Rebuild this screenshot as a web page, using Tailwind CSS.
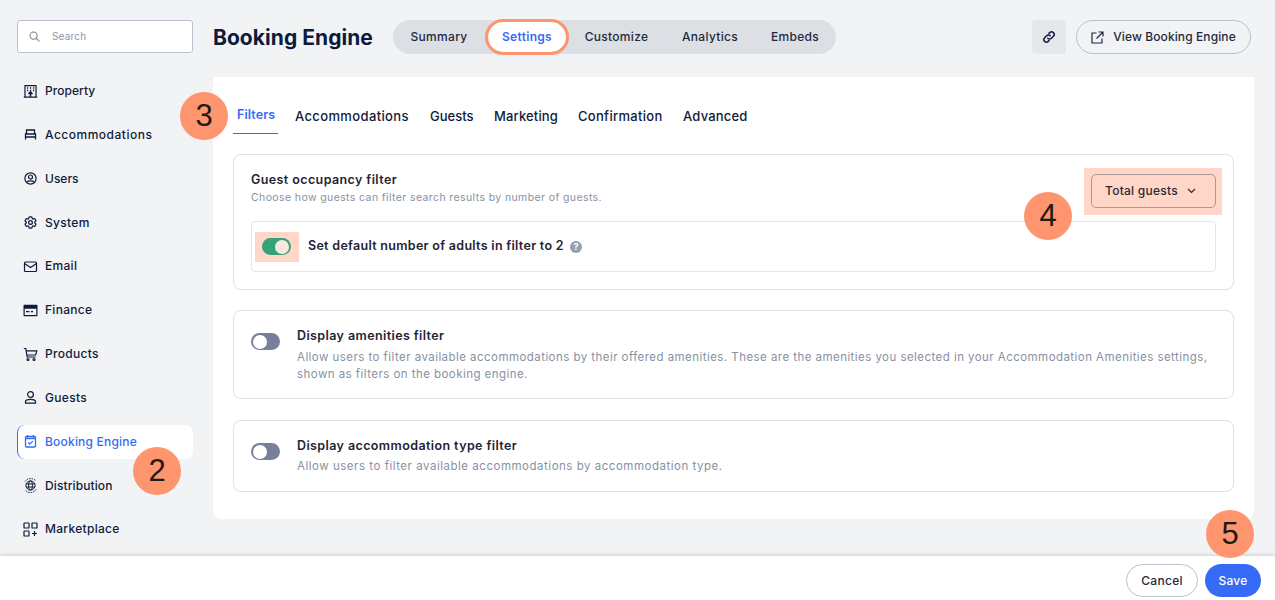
<!DOCTYPE html>
<html lang="en">
<head>
<meta charset="utf-8">
<script src="https://cdn.jsdelivr.net/npm/@tailwindcss/browser@4"></script>
<title>Booking Engine</title>
</head>
<body class="m-0">
<div class="relative w-[1275px] h-[600px] overflow-hidden bg-[#F1F3F5] font-['Inter','Liberation_Sans',sans-serif] text-[#101B3B]">
  <div class="flex h-[556px]">
    <!-- Sidebar -->
    <aside class="w-[213px] shrink-0 pl-[17px] pt-[20px]">
      <div class="flex items-center w-[176px] h-[33px] bg-white border border-[#B9C1CF] rounded-[3px] pl-[11px] gap-[12px]">
        <svg class="w-[11px] h-[11px]" viewBox="0 0 12 12" fill="none" stroke="#6F7A8E" stroke-width="1.1"><circle cx="5" cy="5" r="3.9"/><path d="M8 8l3.2 3.2" stroke-linecap="round"/></svg>
        <span class="text-[10px] tracking-[0.2px] text-[#8C96A8]">Search</span>
      </div>
      <nav class="mt-[21px] flex flex-col gap-[9.85px] text-[12px] font-medium tracking-[0.3px]">
        <a class="flex items-center h-[34px] w-[176px] pl-[6px] gap-[7px]">
          <svg class="w-[15px] h-[15px]" viewBox="0 0 15 15" fill="none" stroke="#101B3B" stroke-width="1.2"><path d="M2 13V1.6h11V13M.8 13.2h13.4"/><path d="M4 4h1.2M7 4h1.2M10 4h1.2M4 6.5h1.2M7 6.5h1.2M10 6.5h1.2" stroke-width="1.5"/><path d="M7.5 8v5M5.5 10l2-2 2 2" stroke-width="1.6"/></svg>
          <span class="tracking-[0.05px]">Property</span>
        </a>
        <a class="flex items-center h-[34px] w-[176px] pl-[6px] gap-[7px]">
          <svg class="w-[15px] h-[15px]" viewBox="0 0 15 15" fill="none" stroke="#101B3B" stroke-width="1.3"><path d="M3.500 6.500V3h8v3.500M2.500 12.500V7h10v5.500M2.500 10h10"/></svg>
          <span class="tracking-[0.5px]">Accommodations</span>
        </a>
        <a class="flex items-center h-[34px] w-[176px] pl-[6px] gap-[7px]">
          <svg class="w-[15px] h-[15px]" viewBox="0 0 15 15" fill="none" stroke="#101B3B" stroke-width="1.2"><circle cx="7.5" cy="7.5" r="5.6"/><circle cx="7.5" cy="6" r="2"/><path d="M4 11c1-1.6 6-1.6 7 0"/></svg>
          <span class="tracking-[0px]">Users</span>
        </a>
        <a class="flex items-center h-[34px] w-[176px] pl-[6px] gap-[7px]">
          <svg class="w-[15px] h-[15px]" viewBox="0 0 24 24" fill="none" stroke="#101B3B" stroke-width="2"><path d="M9.594 3.94c.09-.542.56-.94 1.11-.94h2.593c.55 0 1.02.398 1.11.94l.213 1.281c.063.374.313.686.645.87.074.04.147.083.22.127.325.196.72.257 1.075.124l1.217-.456a1.125 1.125 0 0 1 1.37.49l1.296 2.247a1.125 1.125 0 0 1-.26 1.431l-1.003.827c-.293.241-.438.613-.43.992a7.723 7.723 0 0 1 0 .255c-.008.378.137.75.43.991l1.004.827c.424.35.534.955.26 1.43l-1.298 2.247a1.125 1.125 0 0 1-1.369.491l-1.217-.456c-.355-.133-.75-.072-1.076.124a6.47 6.47 0 0 1-.22.128c-.331.183-.581.495-.644.869l-.213 1.281c-.09.543-.56.94-1.11.94h-2.594c-.55 0-1.019-.398-1.11-.94l-.213-1.281c-.062-.374-.312-.686-.644-.87a6.52 6.52 0 0 1-.22-.127c-.325-.196-.72-.257-1.076-.124l-1.217.456a1.125 1.125 0 0 1-1.369-.49l-1.297-2.247a1.125 1.125 0 0 1 .26-1.431l1.004-.827c.292-.24.437-.613.43-.991a6.932 6.932 0 0 1 0-.255c.007-.38-.138-.751-.43-.992l-1.004-.827a1.125 1.125 0 0 1-.26-1.43l1.297-2.247a1.125 1.125 0 0 1 1.37-.491l1.216.456c.356.133.751.072 1.076-.124.072-.044.146-.086.22-.128.332-.183.582-.495.644-.869l.214-1.28Z"/><circle cx="12" cy="12" r="3"/></svg>
          <span>System</span>
        </a>
        <a class="flex items-center h-[34px] w-[176px] pl-[6px] gap-[7px]">
          <svg class="w-[15px] h-[15px]" viewBox="0 0 15 15" fill="none" stroke="#101B3B" stroke-width="1.2"><rect x="1.500" y="3" width="12" height="9.500" rx="1"/><path d="M1.500 4.500l6 4 6-4"/></svg>
          <span>Email</span>
        </a>
        <a class="flex items-center h-[34px] w-[176px] pl-[6px] gap-[7px]">
          <svg class="w-[15px] h-[15px]" viewBox="0 0 15 15"><path fill-rule="evenodd" fill="#101B3B" d="M1.500 1.800h12c.6 0 1 .4 1 1v9.400c0 .6-.4 1-1 1h-12c-.6 0-1-.4-1-1V2.800c0-.6.4-1 1-1zM1.700 5.800v6.200h11.600V5.800zM3 8h3.500v1.200H3zM8 8h2v1.200H8z"/></svg>
          <span>Finance</span>
        </a>
        <a class="flex items-center h-[34px] w-[176px] pl-[6px] gap-[7px]">
          <svg class="w-[15px] h-[15px]" viewBox="0 0 15 15" fill="none" stroke="#101B3B" stroke-width="1.2"><path d="M.8 1.500h2l1.300 8.500h8.600M3.200 3.800h10.600L12.600 8H3.800"/><circle cx="5" cy="12.500" r="1"/><circle cx="11" cy="12.500" r="1"/></svg>
          <span>Products</span>
        </a>
        <a class="flex items-center h-[34px] w-[176px] pl-[6px] gap-[7px]">
          <svg class="w-[15px] h-[15px]" viewBox="0 0 15 15" fill="none" stroke="#101B3B" stroke-width="1.2"><circle cx="7.500" cy="4.500" r="2.900"/><path d="M2.500 13.200v-1.600c0-3 10-3 10 0v1.600z"/></svg>
          <span>Guests</span>
        </a>
        <a class="flex items-center h-[34px] w-[176px] pl-[5px] gap-[7px] bg-white rounded-lg border-l border-[#356BF6] text-[#356BF6]">
          <svg class="w-[15px] h-[15px]" viewBox="0 0 15 15" fill="none" stroke="#356BF6" stroke-width="1.300"><rect x="2.500" y="2.500" width="10" height="10.500" rx="1"/><path d="M4.500 1v2.500M10.500 1v2.500M2.500 4.500h10" /><path d="M5.200 8.500l1.600 1.600 3-3"/></svg>
          <span class="tracking-[0.2px]">Booking Engine</span>
        </a>
        <a class="flex items-center h-[34px] w-[176px] pl-[6px] gap-[7px]">
          <svg class="w-[15px] h-[15px]" viewBox="0 0 15 15" fill="none" stroke="#101B3B" stroke-width="1"><circle cx="7.500" cy="7.500" r="4.600"/><ellipse cx="7.500" cy="7.500" rx="2" ry="4.600"/><path d="M3 6h9M3 9h9"/><path d="M2 3.500A7 7 0 0 1 13 3M13.200 11.500A7 7 0 0 1 2 12" stroke-dasharray="1.500 1"/></svg>
          <span class="tracking-[0.1px]">Distribution</span>
        </a>
        <a class="flex items-center h-[34px] w-[176px] pl-[6px] gap-[7px]">
          <svg class="w-[15px] h-[15px]" viewBox="0 0 15 15" fill="none" stroke="#101B3B" stroke-width="1.200"><rect x="1" y="1" width="5" height="5" rx=".6"/><rect x="9" y="1" width="5" height="5" rx=".6"/><rect x="1" y="9" width="5" height="5" rx=".6"/><path d="M11.500 9v5M9 11.500h5"/></svg>
          <span>Marketplace</span>
        </a>
      </nav>
    </aside>

    <!-- Main -->
    <main class="w-[1041px] shrink-0 pt-[20px]">
      <header class="flex items-center h-[34px]">
        <h1 class="m-0 text-[21px] font-bold leading-none tracking-[0.05px] text-[#0D1A3C] w-[180px]">Booking Engine</h1>
        <div class="flex items-center w-[443px] h-[34px] rounded-full bg-[#DCDFE4] text-[12px] font-medium tracking-[0.3px] text-[#1F2A40] text-center">
          <span class="w-[92px]">Summary</span>
          <span class="w-[78px] h-[30px] flex items-center justify-center bg-white rounded-full text-[#356BF6] font-semibold outline-3 outline-[#FF956E] mx-[3px]">Settings</span>
          <span class="w-[95px]">Customize</span>
          <span class="w-[92px]">Analytics</span>
          <span class="w-[78px]">Embeds</span>
        </div>
        <div class="ml-auto flex items-center gap-[10px] mr-[3px]">
          <button class="flex items-center justify-center w-[34px] h-[34px] rounded-[4px] bg-[#E5E7EB]">
            <svg class="w-[14px] h-[14px]" viewBox="0 0 14 14" fill="none" stroke="#101B3B" stroke-width="1.500" stroke-linecap="round"><path d="M5.800 8.200a2.500 2.500 0 0 0 3.600 0l2-2a2.500 2.500 0 0 0-3.600-3.600l-.8.8"/><path d="M8.200 5.800a2.500 2.500 0 0 0-3.600 0l-2 2a2.500 2.500 0 0 0 3.600 3.600l.8-.8"/></svg>
          </button>
          <button class="flex items-center justify-center w-[175px] h-[34px] rounded-full border border-[#B9C1CF] gap-[9px] text-[12px] font-medium tracking-[0.1px] text-[#1F2A40]">
            <svg class="w-[13px] h-[13px]" viewBox="0 0 13 13" fill="none" stroke="#1F2A40" stroke-width="1.200"><path d="M5.500 2H1v10h10V7.500M7.500 1H12v4.500M12 1L5.500 7.500"/></svg>
            <span>View Booking Engine</span>
          </button>
        </div>
      </header>

      <section class="mt-[23px] h-[442px] w-[1041px] bg-white rounded-b-lg px-[20px]">
        <div class="flex items-start pt-[30px] h-[77px] text-[13px] font-medium tracking-[0.3px]">
          <div class="w-[45px] h-[27px] border-b border-[#356BF6] pl-[4px] text-[12.5px] tracking-[0.1px] text-[#356BF6] font-semibold leading-[16px]">Filters</div>
          <div class="flex gap-[21px] ml-[17px] leading-[18px] whitespace-nowrap">
            <span class="w-[114px] tracking-[0.37px]">Accommodations</span><span class="w-[43px] tracking-[0px]">Guests</span><span class="w-[63px] tracking-[0.15px]">Marketing</span><span class="w-[84px]">Confirmation</span><span class="w-[64px] tracking-[0.2px]">Advanced</span>
          </div>
        </div>

        <div class="h-[136px] border border-[#DEE1E6] rounded-lg pl-[17px] pr-[17px] pt-[19px]">
          <div class="flex justify-between items-start">
            <div>
              <div class="text-[12.5px] font-semibold leading-[16px] text-[#1F2435] tracking-[0.4px] -mt-[2px]">Guest occupancy filter</div>
              <div class="mt-[2px] text-[10.5px] leading-[16px] text-[#8791A3] tracking-[0.39px]">Choose how guests can filter search results by number of guests.</div>
            </div>
            <div class="-mt-[6px] -mr-[6px] bg-[#FFD6C8] pl-[7px] pr-[6px] pt-[6px] pb-[7px]">
              <button class="flex items-center w-[125px] h-[34px] rounded-[5px] border border-[#A89A97] pl-[13px] gap-[9px] text-[12px] font-medium tracking-[0.25px] text-[#2B2A33]">
                <span>Total guests</span>
                <svg class="w-[9px] h-[6px]" viewBox="0 0 9 6" fill="none" stroke="#2B2A33" stroke-width="1.200"><path d="M1 1l3.500 3.500L8 1"/></svg>
              </button>
            </div>
          </div>
          <div class="mt-[6px] h-[51px] border border-[#E3E6EA] rounded-[4px] flex items-center pl-[3px]">
            <div class="w-[44px] h-[30px] bg-[#FFD6C8] flex items-center pl-[7px]">
              <span class="w-[29px] h-[17px] rounded-full bg-[#34A37A] flex items-center justify-end pr-[2px]"><span class="w-[14px] h-[14px] rounded-full bg-[#FBE9DF]"></span></span>
            </div>
            <span class="ml-[9px] text-[12.5px] font-semibold tracking-[0.3px] text-[#1F2435]">Set default number of adults in filter to 2</span>
            <span class="ml-[6px] w-[12px] h-[12px] rounded-full bg-[#969FAF] text-white text-[9px] font-bold flex items-center justify-center leading-none">?</span>
          </div>
        </div>

        <div class="mt-[20px] h-[89px] border border-[#DEE1E6] rounded-lg pl-[17px] pr-[17px] pt-[22px] flex items-start gap-[17px]">
          <span class="w-[29px] h-[17px] shrink-0 rounded-full bg-[#76809A] flex items-center pl-[2px]"><span class="w-[14px] h-[14px] rounded-full bg-white"></span></span>
          <div class="-mt-[6px]">
            <div class="text-[12.5px] font-semibold leading-[17px] text-[#1F2435] tracking-[0.4px]">Display amenities filter</div>
            <div class="mt-[5px] text-[11.5px] leading-[17px] text-[#8791A3] tracking-[0.45px] whitespace-nowrap">Allow users to filter available accommodations by their offered amenities. These are the amenities you selected in your Accommodation Amenities settings,<br>shown as filters on the booking engine.</div>
          </div>
        </div>

        <div class="mt-[21px] h-[72px] border border-[#DEE1E6] rounded-lg pl-[17px] pr-[17px] pt-[22px] flex items-start gap-[17px]">
          <span class="w-[29px] h-[17px] shrink-0 rounded-full bg-[#76809A] flex items-center pl-[2px]"><span class="w-[14px] h-[14px] rounded-full bg-white"></span></span>
          <div class="-mt-[6px]">
            <div class="text-[12.5px] font-semibold leading-[17px] text-[#1F2435] tracking-[0.4px]">Display accommodation type filter</div>
            <div class="mt-[4px] text-[11.5px] leading-[17px] text-[#8791A3] tracking-[0.52px]">Allow users to filter available accommodations by accommodation type.</div>
          </div>
        </div>
      </section>
    </main>
  </div>

  <!-- Footer -->
  <footer class="h-[44px] bg-white shadow-[0_-1px_4px_rgba(0,0,0,0.15)] flex items-start justify-end gap-[7px] pt-[8px] pr-[14px] relative">
    <button class="w-[72px] h-[33px] rounded-full border border-[#B9C1CF] text-[12px] font-medium tracking-[0.3px] text-[#1F2A40] bg-white">Cancel</button>
    <button class="w-[56px] h-[33px] rounded-full bg-[#356BF6] text-[12px] font-medium tracking-[0.25px] text-white">Save</button>
  </footer>

  <!-- Annotation markers -->
  <div class="absolute left-[180px] top-[92px] w-[48px] h-[48px] rounded-full bg-[#FF956E] flex items-center justify-center font-['Liberation_Sans',sans-serif] text-[31px] text-[#1E1A14]">3</div>
  <div class="absolute left-[133px] top-[447px] w-[48px] h-[48px] rounded-full bg-[#FF956E] flex items-center justify-center font-['Liberation_Sans',sans-serif] text-[31px] text-[#1E1A14]">2</div>
  <div class="absolute left-[1024px] top-[192px] w-[48px] h-[48px] rounded-full bg-[#FF956E] flex items-center justify-center font-['Liberation_Sans',sans-serif] text-[31px] text-[#1E1A14]">4</div>
  <div class="absolute left-[1206px] top-[510px] w-[48px] h-[48px] rounded-full bg-[#FF956E] flex items-center justify-center font-['Liberation_Sans',sans-serif] text-[31px] text-[#1E1A14]">5</div>
</div>
</body>
</html>
